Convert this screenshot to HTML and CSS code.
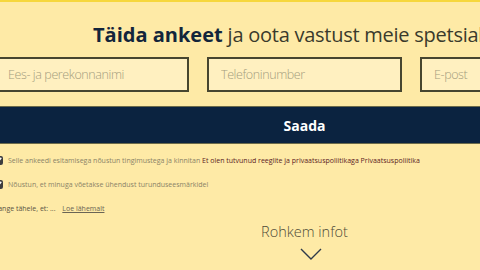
FILE: index.html
```
<!DOCTYPE html>
<html lang="et">
<head>
  <meta charset="UTF-8" />
  <meta name="viewport" content="width=device-width, initial-scale=1.0" />
  <title>Täida ankeet</title>
  <link rel="stylesheet" href="styles.css">
</head>
<body>
  <div class="topbar"></div>
  <div class="page">
    <h1 class="title"><b>Täida ankeet</b> ja oota vastust meie spetsialistilt</h1>
    <form class="form" onsubmit="return false;">
      <div class="fields">
        <input type="text" placeholder="Ees- ja perekonnanimi">
        <input type="text" placeholder="Telefoninumber">
        <input type="text" placeholder="E-post">
      </div>
      <button class="send">Saada</button>
      <label class="check">
        <input type="checkbox" checked>
        <span>Selle ankeedi esitamisega nõustun tingimustega ja kinnitan <a href="#">Et olen tutvunud reeglite ja privaatsuspoliitikaga Privaatsuspoliitika</a></span>
      </label>
      <label class="check">
        <input type="checkbox" checked>
        <span>Nõustun, et minuga võetakse ühendust turunduseesmärkidel</span>
      </label>
      <p class="note">Pange tähele, et: ... <a href="#">Loe lähemalt</a></p>
    </form>
    <div class="more">
      <span>Rohkem infot</span>
      <svg width="22" height="12" viewBox="0 0 22 12"><path d="M1 1 L11 11 L21 1" fill="none" stroke="#2e3a4a" stroke-width="1.4"/></svg>
    </div>
  </div>
</body>
</html>
```

FILE: styles.css
```
body { margin: 0; background: #feeaa6; font-family: "Open Sans", Arial, sans-serif; color: #3c3a30; overflow: hidden; }
.topbar { height: 2px; background: #f6d73e; }
.page { width: 621px; margin-left: -6px; }
.title { margin: 18px 0 0; font-size: 20px; font-weight: 400; color: #3a3a2c; padding-left: 99px; white-space: nowrap; line-height: 30px; letter-spacing: -0.25px; }
.title b { color: #13253b; font-weight: 700; letter-spacing: 0; }
.fields { display: flex; gap: 18px; margin-top: 7px; }
.fields input { flex: 1; min-width: 0; height: 35px; box-sizing: border-box; border: 2px solid #47462f; background: #fff0c0; padding: 0 12px; font-family: "Open Sans", sans-serif; font-weight: 300; font-size: 12.5px; letter-spacing: -0.4px; color: #555; }
.fields input::placeholder { color: #a49d7e; }
.send { display: block; width: 100%; height: 36px; margin-top: 15px; border: 0; background: #0b2340; color: #fff; font-family: "Open Sans", sans-serif; font-weight: 700; font-size: 14px; box-shadow: 0 1px 0 #6b6a4a, 0 -1px 0 #6b6a4a; }
.check { display: flex; align-items: center; gap: 5px; margin-top: 13px; font-size: 7px; color: #8a8366; }
.check + .check { margin-top: 15px; }
.check input { width: 9px; height: 9px; margin: 0; accent-color: #3d3d3d; }
.check a { color: #5b1a24; text-decoration: none; }
.note { margin: 15px 0 0; font-size: 7px; color: #5a5444; }
.note a { color: #6a6454; margin-left: 5px; }
.more { display: flex; flex-direction: column; align-items: center; margin-top: 9px; }
.more span { font-size: 14.5px; font-weight: 300; color: #4e4a38; line-height: 20px; }
.more svg { margin-top: 6px; margin-left: 12px; }
```
